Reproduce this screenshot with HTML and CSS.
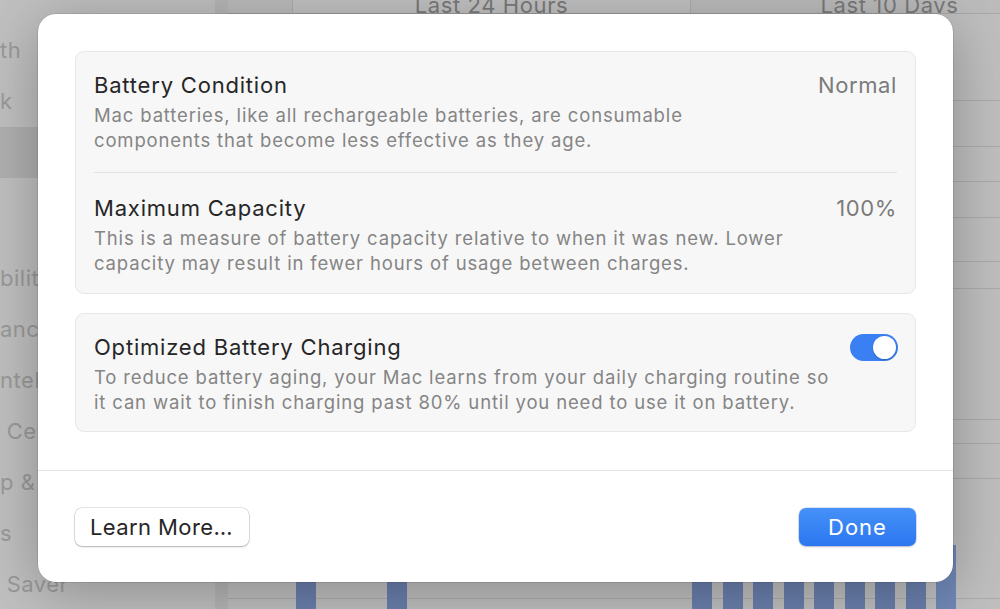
FILE: index.html
```html
<!DOCTYPE html>
<html lang="en">
<head>
<meta charset="utf-8">
<title>Battery Health</title>
<link rel="stylesheet" href="styles.css">
</head>
<body>
<div class="window">
  <aside class="sidebar">
    <div class="side-item">th</div>
    <div class="side-item">k</div>
    <div class="side-item selected"></div>
    <div class="side-item"></div>
    <div class="side-gap"></div>
    <div class="side-item">bilit</div>
    <div class="side-item">anc</div>
    <div class="side-item">ntell</div>
    <div class="side-item">&nbsp;Cen</div>
    <div class="side-item">p &amp;</div>
    <div class="side-item">s</div>
    <div class="side-item">&nbsp;Saver</div>
  </aside>
  <main class="content">
    <div class="segmented">
      <div class="seg seg-on">Last 24 Hours</div>
      <div class="seg">Last 10 Days</div>
    </div>
    <div class="chart">
      <div class="grid">
        <div class="gl" style="height:87px"></div>
        <div class="gl" style="height:46px"></div>
        <div class="gl" style="height:35px"></div>
        <div class="gl" style="height:36px"></div>
        <div class="gl" style="height:44px"></div>
        <div class="gl" style="height:27px"></div>
        <div class="gl" style="height:131px"></div>
        <div class="gl" style="height:24px"></div>
        <div class="gl" style="height:35px"></div>
        <div class="gl" style="height:120px"></div>
      </div>
      <div class="bars">
        <div class="bar-group first">
          <div class="bar" style="height:150px"></div>
          <div class="bar" style="height:150px"></div>
        </div>
        <div class="bar-group second">
          <div class="bar" style="height:150px"></div>
          <div class="bar" style="height:150px"></div>
          <div class="bar" style="height:150px"></div>
          <div class="bar" style="height:150px"></div>
          <div class="bar" style="height:150px"></div>
          <div class="bar" style="height:150px"></div>
          <div class="bar" style="height:150px"></div>
          <div class="bar" style="height:150px"></div>
          <div class="bar tall" style="height:64px"></div>
        </div>
      </div>
    </div>
  </main>
</div>

<div class="dialog">
  <div class="dialog-body">
    <section class="group">
      <div class="row">
        <div class="text">
          <div class="title">Battery Condition</div>
          <div class="desc">Mac batteries, like all rechargeable batteries, are consumable<br>components that become less effective as they age.</div>
        </div>
        <div class="value">Normal</div>
      </div>
      <div class="divider"></div>
      <div class="row row-second">
        <div class="text">
          <div class="title">Maximum Capacity</div>
          <div class="desc">This is a measure of battery capacity relative to when it was new. Lower<br>capacity may result in fewer hours of usage between charges.</div>
        </div>
        <div class="value">100%</div>
      </div>
    </section>
    <section class="group group-toggle">
      <div class="row">
        <div class="text">
          <div class="title">Optimized Battery Charging</div>
          <div class="desc">To reduce battery aging, your Mac learns from your daily charging routine so<br>it can wait to finish charging past 80% until you need to use it on battery.</div>
        </div>
        <div class="switch" role="switch" aria-checked="true"><div class="knob"></div></div>
      </div>
    </section>
  </div>
  <footer class="dialog-footer">
    <button class="btn">Learn More…</button>
    <button class="btn btn-primary">Done</button>
  </footer>
</div>
</body>
</html>
```

FILE: styles.css
```css
* { box-sizing: border-box; }
html, body {
  margin: 0;
  padding: 0;
  width: 1000px;
  height: 609px;
  overflow: hidden;
  font-family: Inter, "Noto Sans", "Liberation Sans", sans-serif;
}
body { position: relative; background: #bfbfbf; }

/* Background window (dimmed) */
.window {
  display: flex;
  width: 1000px;
  height: 609px;
  background: #bfbfbf;
  overflow: hidden;
}
.sidebar {
  width: 228px;
  flex: none;
  padding-top: 25px;
  background: #c0c0c0;
  border-right: 13px solid #b6b6b6;
  color: #9a9a9a;
  font-size: 22px;
  letter-spacing: 0.5px;
  white-space: nowrap;
  overflow: hidden;
}
.side-item {
  height: 51px;
  line-height: 51px;
}
.side-item.selected { background: #b0b0b0; }
.side-gap { height: 24px; }

.content {
  flex: 1;
  display: flex;
  flex-direction: column;
  min-width: 0;
}
.segmented {
  display: flex;
  height: 14px;
  padding-left: 64px;
  border-bottom: 1px solid #a8a8a8;
  overflow: hidden;
  background: #bcbcbc;
}
.seg {
  flex: none;
  width: 398px;
  text-align: center;
  font-size: 22px;
  letter-spacing: 0.6px;
  line-height: 10px;
  color: #7b7b7b;
  border-left: 1px solid #adadad;
}
.seg-on { background: #c2c2c2; }

.chart {
  flex: 1;
  display: grid;
}
.grid, .bars { grid-area: 1 / 1; }
.gl { border-bottom: 1px solid #ababab; }
.bars {
  display: flex;
  align-items: flex-end;
}
.bar-group { display: flex; align-items: flex-end; }
.bar-group.first { margin-left: 68px; gap: 71px; }
.bar-group.second { margin-left: 285px; gap: 10.5px; }
.bar { width: 20px; background: #6a7fac; }
.bar.tall { background: #7088b8; }

/* Dialog sheet */
.dialog {
  position: absolute;
  left: 38px;
  top: 14px;
  width: 915px;
  height: 568px;
  background: #ffffff;
  border-radius: 18px;
  box-shadow: 0 0 0 0.5px rgba(0,0,0,0.18), 0 10px 60px rgba(0,0,0,0.28);
  display: flex;
  flex-direction: column;
  color: #262626;
}
.dialog-body {
  padding: 37px 37px 38px;
  display: flex;
  flex-direction: column;
  gap: 19px;
  border-bottom: 1px solid #e3e3e3;
}
.group {
  background: #f7f7f7;
  border: 1px solid #e8e8e8;
  border-radius: 9px;
}
.row {
  display: flex;
  align-items: flex-start;
  justify-content: space-between;
  padding: 18px 18px 18px;
}
.row-second { padding-top: 20px; padding-bottom: 17px; }
.group-toggle .row { padding-bottom: 16px; }
.divider {
  height: 1px;
  margin: 1px 18px 0;
  background: #e2e2e2;
}
.text { min-width: 0; }
.title {
  font-size: 22px;
  line-height: 30px;
  color: #262626;
  letter-spacing: 0.8px;
}
.desc {
  margin-top: 3px;
  font-size: 18.5px;
  line-height: 25px;
  letter-spacing: 0.85px;
  color: #858585;
  white-space: nowrap;
}
.value {
  font-size: 22px;
  line-height: 30px;
  letter-spacing: 0.6px;
  color: #7b7b7b;
  white-space: nowrap;
}
.switch {
  flex: none;
  width: 48px;
  height: 27px;
  margin-top: 2px;
  margin-right: -1px;
  border-radius: 14px;
  background: #3b80f3;
  padding: 2px;
  display: flex;
  justify-content: flex-end;
}
.knob {
  width: 23px;
  height: 23px;
  border-radius: 50%;
  background: #ffffff;
  box-shadow: 0 1px 2px rgba(0,0,0,0.25);
}

.dialog-footer {
  flex: 1;
  display: flex;
  justify-content: space-between;
  align-items: flex-start;
  padding: 37px 37px 0;
}
.btn {
  font-family: inherit;
  font-size: 22px;
  letter-spacing: 0.4px;
  height: 38px;
  border-radius: 7px;
  border: none;
  padding: 0 15px;
  background: #ffffff;
  color: #262626;
  box-shadow: 0 0 0 0.5px rgba(0,0,0,0.2), 0 1px 2px rgba(0,0,0,0.22);
  width: 174px;
  text-align: left;
}
.btn-primary {
  width: 117px;
  text-align: center;
  letter-spacing: 1px;
  color: #ffffff;
  background: linear-gradient(#4591f8, #2c76f0);
  box-shadow: 0 0 0 0.5px rgba(0,60,200,0.25), 0 1px 2px rgba(0,0,0,0.2);
}
```
